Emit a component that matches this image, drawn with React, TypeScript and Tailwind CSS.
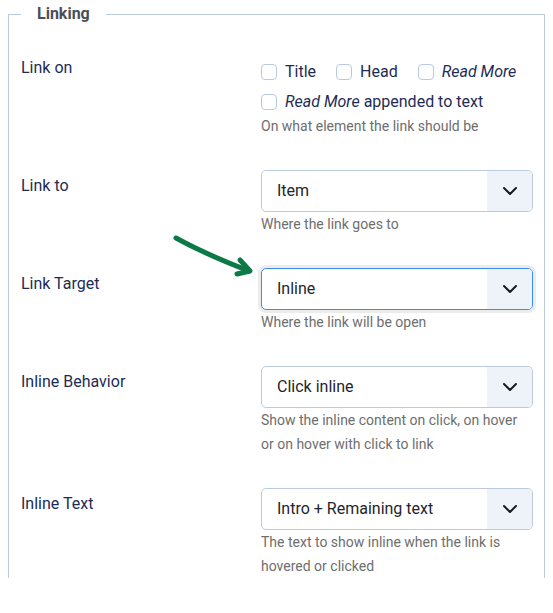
import React from "react";

function Chevron() {
  return (
    <svg width="14" height="8" viewBox="0 0 14 8" fill="none">
      <path d="M1 1l6 6 6-6" stroke="#1b1b1b" strokeWidth="2" strokeLinecap="round" strokeLinejoin="round" />
    </svg>
  );
}

function Select({ value, focused = false }: { value: string; focused?: boolean }) {
  return (
    <div
      className={
        "flex h-[42px] w-full items-stretch rounded-[5px] border bg-white " +
        (focused ? "border-[#3d8cf4] shadow-[0_0_0_3px_#ececec]" : "border-[#bccadf]")
      }
    >
      <div className="flex flex-1 items-center pl-[15px] text-[16px] text-[#22262b]">{value}</div>
      <div className="flex w-[45px] items-center justify-center rounded-r-[4px] bg-[#eef3fa]">
        <Chevron />
      </div>
    </div>
  );
}

function Check({ children, last = false }: { children: React.ReactNode; last?: boolean }) {
  return (
    <span className={"inline-flex shrink-0 items-center whitespace-nowrap " + (last ? "" : "mr-5")}>
      <span className="mr-2 inline-block h-[16px] w-[16px] rounded-[4px] border border-[#b9c9e1] bg-white" />
      <span className="text-[16px] leading-6 text-[#1e2c55]">{children}</span>
    </span>
  );
}

function Help({ children }: { children: React.ReactNode }) {
  return <div className="text-[14px] leading-6 text-[#6e6e6e]">{children}</div>;
}

function Row({ label, children }: { label: string; children: React.ReactNode }) {
  return (
    <div className="grid grid-cols-[240px_1fr]">
      <div className="pt-1 text-[16px] leading-6 text-[#1e2c55]">{label}</div>
      <div className="min-w-0">{children}</div>
    </div>
  );
}

export default function App() {
  return (
    <div className="relative bg-white pt-[2px]" style={{ fontFamily: "Roboto, 'Noto Sans', sans-serif" }}>
      <fieldset className="mx-2 border border-b-0 border-[#bccadf] pb-0 pl-3 pr-[11px] pt-[26px]">
        <legend className="px-4 text-[16px] font-bold leading-6 text-[#4a4f57]">Linking</legend>
        <div className="flex flex-col gap-8">
          <Row label="Link on">
            <div className="pt-2">
              <div className="flex flex-col gap-[6px]">
                <div className="flex">
                  <Check>Title</Check>
                  <Check>Head</Check>
                  <Check last><em>Read More</em></Check>
                </div>
                <div className="flex">
                  <Check last><em>Read More</em> appended to text</Check>
                </div>
              </div>
              <Help>On what element the link should be</Help>
            </div>
          </Row>
          <Row label="Link to">
            <Select value="Item" />
            <Help>Where the link goes to</Help>
          </Row>
          <Row label="Link Target">
            <Select value="Inline" focused />
            <Help>Where the link will be open</Help>
          </Row>
          <Row label="Inline Behavior">
            <Select value="Click inline" />
            <Help>Show the inline content on click, on hover or on hover with click to link</Help>
          </Row>
          <Row label="Inline Text">
            <Select value="Intro + Remaining text" />
            <Help>The text to show inline when the link is hovered or clicked</Help>
          </Row>
        </div>
      </fieldset>
      <svg className="pointer-events-none absolute left-0 top-0" width="553" height="613">
        <path
          d="M176 238 Q 205 254 249 271"
          stroke="#0b7a47"
          strokeWidth="5"
          fill="none"
          strokeLinecap="round"
        />
        <path
          d="M240 260 L 250 271 L 237 274"
          stroke="#0b7a47"
          strokeWidth="5"
          fill="none"
          strokeLinecap="round"
          strokeLinejoin="round"
        />
      </svg>
    </div>
  );
}
